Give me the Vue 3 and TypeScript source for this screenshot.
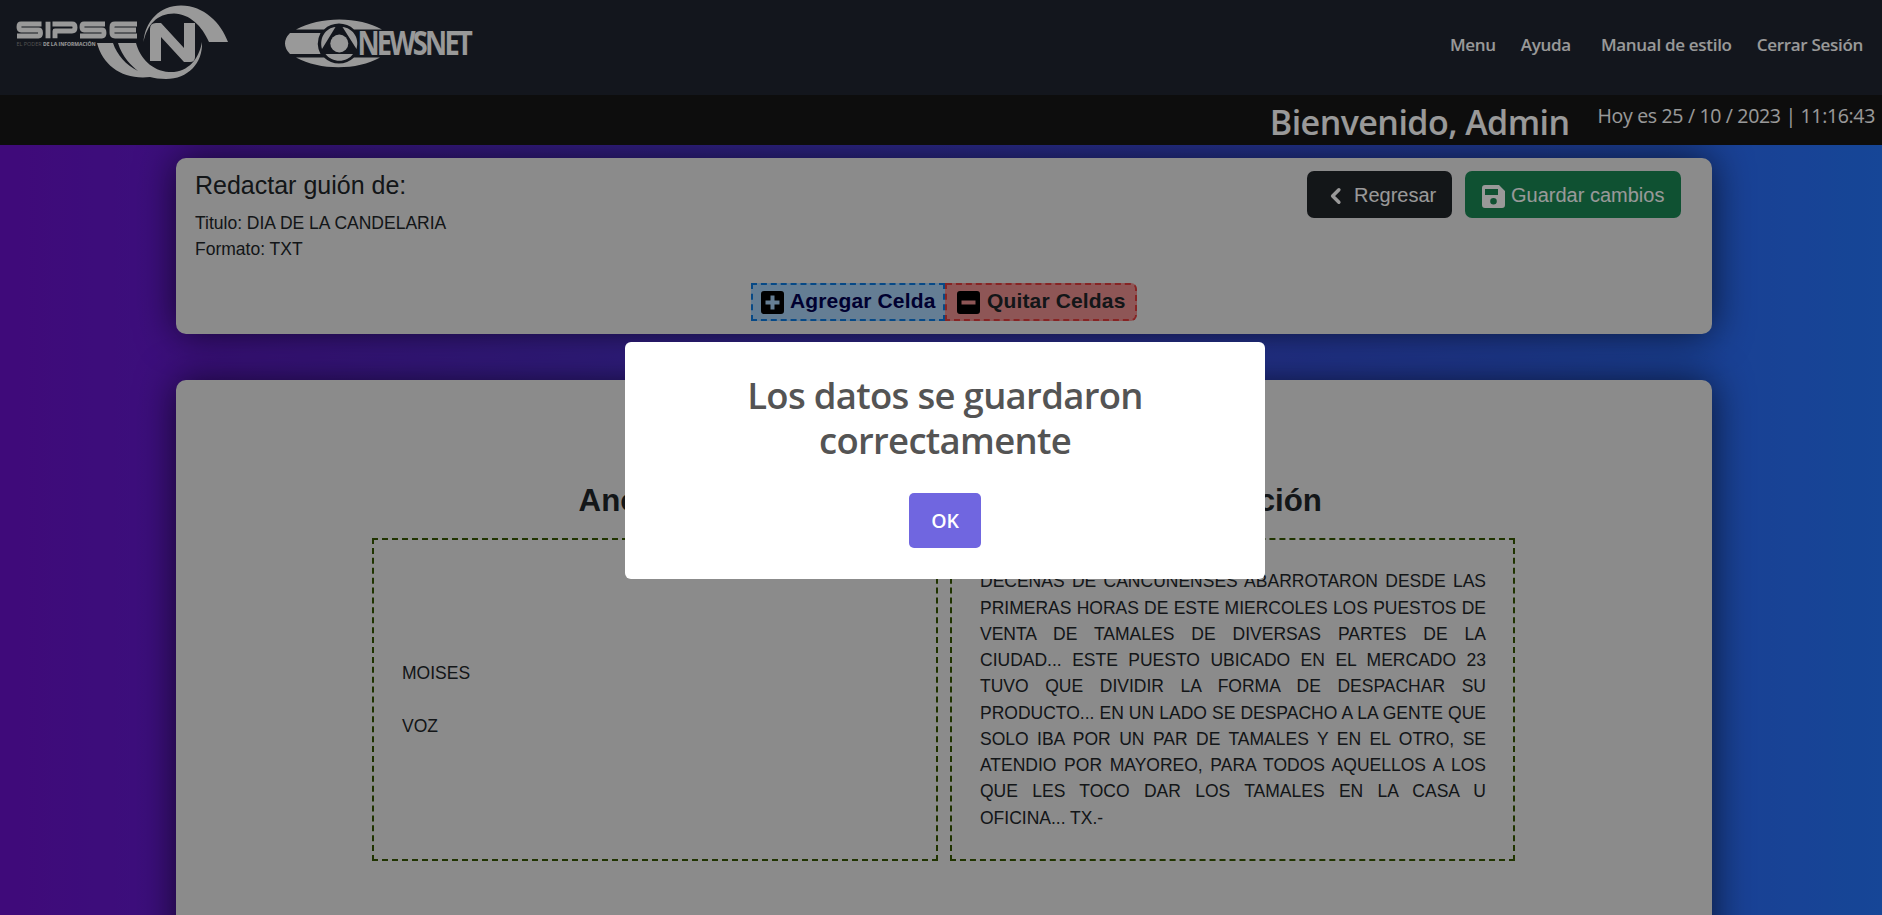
<script setup lang="ts">
import { ref } from 'vue'

const links: string[] = ['Menu', 'Ayuda', 'Manual de estilo', 'Cerrar Sesión']
const open = ref(true)
const lines: string[] = [
  'DECENAS DE CANCUNENSES ABARROTARON DESDE LAS PRIMERAS HORAS DE ESTE MIERCOLES LOS PUESTOS DE VENTA DE TAMALES DE DIVERSAS PARTES DE LA CIUDAD... ESTE PUESTO UBICADO EN EL MERCADO 23 TUVO QUE DIVIDIR LA FORMA DE DESPACHAR SU PRODUCTO... EN UN LADO SE DESPACHO A LA GENTE QUE SOLO IBA POR UN PAR DE TAMALES Y EN EL OTRO, SE ATENDIO POR MAYOREO, PARA TODOS AQUELLOS A LOS QUE LES TOCO DAR LOS TAMALES EN LA CASA U OFICINA... TX.-',
]
</script>

<template>
  <div class="page">
    <header class="nav">
      <div class="logos">
        <svg class="sipse" width="240" height="95" viewBox="0 0 240 95" fill="none">
          <g stroke="#fff" stroke-width="4.9" stroke-linejoin="round">
            <path d="M41.500 24H21Q19 24 19 27T21 30H38.500Q40.500 30 40.500 33T38.500 36H17" />
            <path d="M48 21.700V38.300" />
            <path d="M55 38.300V31H72Q75 31 75 27.500T72 24H52.500" />
            <path d="M105 24H84Q82 24 82 27T84 30H102Q104 30 104 33T102 36H80" />
            <path d="M137 24H115Q112 24 112 27V33Q112 36 115 36H137M112 30H136" />
          </g>
          <g fill="#fff">
            <path d="M143.500 42C145 21 160 5.500 181 5.500C204 5.500 221 23 228 42H209C202 26 190 14 174 13.500C157 13.500 147 25 143.500 42Z" />
            <path d="M97 43H113C117 55 126 65 138 71C132 66 122 57 118 43H136C140 58 152 71 169 72C188 73 199 59 202 42C203 63 188 79 166 79C160 79 154 78 150 77C123 80 103 66 97 43Z" />
            <path d="M150 61V29Q150 23 156 23H161L184 48V23H195V57Q195 62 190 62H184L161 37V61Z" />
          </g>
          <text x="16.500" y="46.300" font-size="5.500" fill="#8b8b8b" textLength="25" lengthAdjust="spacingAndGlyphs">EL PODER</text>
          <text x="43" y="46.300" font-size="5.500" font-weight="700" fill="#fff" textLength="52.500" lengthAdjust="spacingAndGlyphs">DE LA INFORMACIÓN</text>
        </svg>
        <svg class="newsnet" width="220" height="95" viewBox="0 0 220 95">
          <g fill="#fff">
            <path d="M26 29.500C50 16 89 16 112 29.500H84A22 22 0 0 0 54 29.500Z" />
            <path d="M26 57.500C50 70.500 87 70.500 110 57.500H84A22 22 0 0 1 54 57.500Z" />
            <path d="M20 33H50.500A23 23 0 0 0 50.500 54H20Q15 49 15 43.500T20 33Z" />
            <circle cx="69.300" cy="43.500" r="9" />
            <path d="M65.500 27L52 49C49 37 56 28 65.500 27ZM72.500 27L86.500 49C90 37 82 28 72.500 27ZM55.500 54H83C77 63 62 63 55.500 54Z" />
          </g>
          <g transform="translate(87.500 0) scale(0.8 1)">
            <text x="0" y="55.500" font-size="34" font-weight="700" fill="#fff" textLength="144" lengthAdjust="spacing">NEWSNET</text>
          </g>
        </svg>
      </div>
      <nav class="links">
        <a v-for="link in links" :key="link">{{ link }}</a>
      </nav>
    </header>

    <div class="welcome">
      <h2>Bienvenido, Admin</h2>
      <span>Hoy es 25 / 10 / 2023 | 11:16:43</span>
    </div>

    <main>
      <section class="card top">
        <div class="row">
          <div class="info">
            <h1>Redactar guión de:</h1>
            <p>Titulo: DIA DE LA CANDELARIA</p>
            <p>Formato: TXT</p>
          </div>
          <div class="actions">
            <button class="btn dark">
              <svg width="30" height="30" viewBox="0 0 24 24" fill="none" stroke="#fff" stroke-width="2.800" stroke-linecap="round" stroke-linejoin="round"><path d="M14.300 7.800L9.300 12.800L14.300 17.800" /></svg>
              <span>Regresar</span>
            </button>
            <button class="btn green">
              <svg width="23" height="23" viewBox="0 0 23 23" fill="#fff"><path fill-rule="evenodd" d="M3 0H17L23 6V20Q23 23 20 23H3Q0 23 0 20V3Q0 0 3 0ZM3 4V10H16V4ZM11.500 13A3.300 3.300 0 1 0 11.500 19.600A3.300 3.300 0 1 0 11.500 13Z" /></svg>
              <span>Guardar cambios</span>
            </button>
          </div>
        </div>
        <div class="cells">
          <button class="cell add">
            <svg width="23" height="23" viewBox="0 0 23 23"><path fill-rule="evenodd" d="M3 0H20Q23 0 23 3V20Q23 23 20 23H3Q0 23 0 20V3Q0 0 3 0ZM9.500 4.500V9.500H4.500V13.500H9.500V18.500H13.500V13.500H18.500V9.500H13.500V4.500Z" /></svg>
            <span>Agregar Celda</span>
          </button>
          <button class="cell del">
            <svg width="23" height="23" viewBox="0 0 23 23"><path fill-rule="evenodd" d="M3 0H20Q23 0 23 3V20Q23 23 20 23H3Q0 23 0 20V3Q0 0 3 0ZM4.500 9.500V13.500H18.500V9.500Z" /></svg>
            <span>Quitar Celdas</span>
          </button>
        </div>
      </section>

      <section class="card script">
        <div class="grid">
          <h3>Anotación</h3>
          <h3>Descripción</h3>
          <div class="box notes">
            <p>MOISES</p>
            <p>VOZ</p>
          </div>
          <div class="box body">
            <p v-for="line in lines" :key="line">{{ line }}</p>
          </div>
        </div>
      </section>
    </main>

    <div v-if="open" class="overlay">
      <div class="modal" role="dialog">
        <h2>Los datos se guardaron correctamente</h2>
        <button @click="open = false">OK</button>
      </div>
    </div>
  </div>
</template>

<style>
html, body { margin: 0; overflow: hidden; }
</style>

<style scoped>
* { box-sizing: border-box; margin: 0; }
.page {
  height: 915px;
  overflow: hidden;
  background: linear-gradient(to right, #6a11cb, #2575fc);
  font-family: "Liberation Sans", Arial, sans-serif;
  color: #212529;
  font-size: 17.5px;
}
button { border: 0; font-family: inherit; display: flex; align-items: center; }
svg { display: block; flex: none; }
.nav {
  height: 95px;
  display: flex;
  justify-content: space-between;
  background: #212631;
}
.logos { display: flex; gap: 30px; font-family: "Open Sans", sans-serif; }
.links {
  display: flex;
  padding: 32px 19px 0 0;
  font: 600 17px/26px "Open Sans", "Noto Sans", sans-serif;
  letter-spacing: -0.3px;
  color: #fff;
}
.links a { margin-left: 25px; white-space: nowrap; }
.links a:nth-child(3) { margin-left: 30px; }
.welcome {
  height: 50px;
  display: flex;
  justify-content: flex-end;
  background: #161616;
  color: #fff;
  padding-right: 7px;
  position: relative;
  z-index: 1;
  font-family: "Open Sans", "Noto Sans", sans-serif;
}
.welcome h2 { font-size: 34px; font-weight: 600; line-height: 42px; padding-top: 6px; margin-right: 28px; white-space: nowrap; letter-spacing: -0.55px; }
.welcome span { font-size: 19.5px; line-height: 30px; padding-top: 6px; white-space: nowrap; letter-spacing: -0.33px; }
main { display: flex; flex-direction: column; gap: 46px; width: 1536px; margin: 13px 0 0 176px; }
.card { background: #e8e8e8; border-radius: 10px; box-shadow: 0 0 38px rgba(0, 0, 0, 0.65); }
.top { height: 176px; padding: 13px 31px 0 19px; }
.row { display: flex; justify-content: space-between; height: 112px; }
.info { margin-top: -1px; }
.info h1 { font-size: 25px; line-height: 30px; font-weight: 400; margin-bottom: 10px; }
.info p { line-height: 26.25px; }
.actions { display: flex; gap: 13px; align-items: flex-start; }
.btn { height: 47px; border-radius: 7px; color: #fff; font-size: 20px; white-space: nowrap; }
.btn span { margin-top: 2px; }
.dark { width: 145px; padding-left: 14px; gap: 3px; background: #212529; }
.green { width: 216px; padding-left: 17px; gap: 6px; background: #198754; }
.btn.green svg { margin-top: 3px; }
.cells { display: flex; justify-content: center; margin-right: -12px; }
.cell { height: 38px; font-size: 21px; font-weight: 700; gap: 6px; white-space: nowrap; padding: 0; letter-spacing: 0.15px; }
.cell span { margin-top: -3px; }
.add { width: 194px; padding-left: 8px; border: 2px dashed #0d7ae0; background: #a9d2f7; color: #000050; }
.del { width: 192px; padding-left: 10px; gap: 7px; border: 2px dashed #e03c3c; background: #ed9090; color: #212529; border-radius: 0 6px 6px 0; }
.script { height: 620px; padding: 99px 0 0 196px; }
.grid {
  display: grid;
  grid-template-columns: 566px 565px;
  grid-template-rows: 59px 323px;
  column-gap: 12px;
}
h3 { text-align: center; font-size: 31.25px; line-height: 43px; font-weight: 700; }
.box { border: 2px dashed #355500; padding: 0 28px; display: flex; flex-direction: column; justify-content: center; line-height: 26.25px; }
.notes { gap: 27px; }
.body { padding-right: 27px; }
.body p { text-align: justify; }
.overlay {
  position: fixed;
  inset: 0;
  z-index: 10;
  display: flex;
  align-items: flex-start;
  justify-content: center;
  background: rgba(0, 0, 0, 0.4);
  padding: 342px 0 0 8px;
}
.modal {
  width: 640px;
  height: 237px;
  border-radius: 6px;
  background: #fff;
  display: flex;
  flex-direction: column;
  align-items: center;
  font-family: "Open Sans", "Noto Sans", sans-serif;
}
.modal h2 { width: 500px; padding-top: 31px; text-align: center; font-size: 36.5px; line-height: 45px; font-weight: 600; color: #545454; letter-spacing: -0.7px; }
.modal button { margin-top: 30px; width: 72px; height: 55px; border-radius: 5px; justify-content: center; background: #7066e0; color: #fff; font-size: 19.5px; font-weight: 600; letter-spacing: -0.2px; }
</style>
